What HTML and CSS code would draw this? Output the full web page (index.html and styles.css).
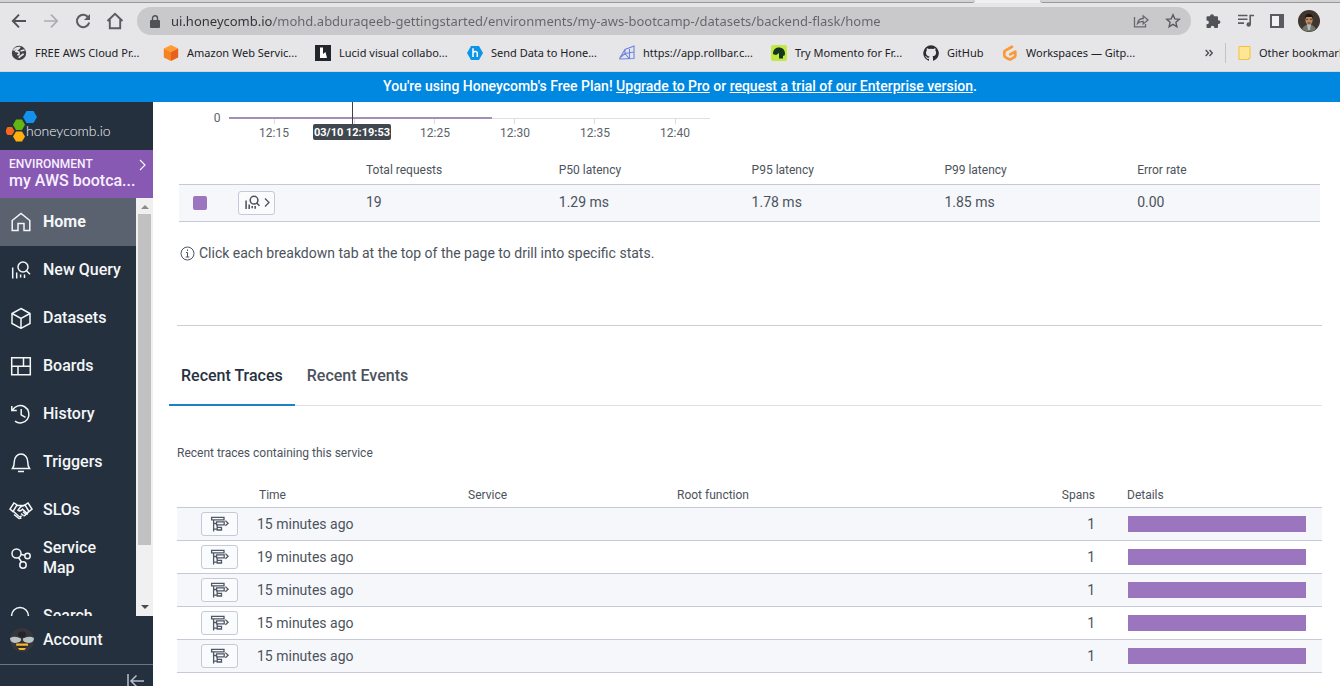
FILE: index.html
```html
<!DOCTYPE html>
<html lang="en">
<head>
<meta charset="utf-8">
<title>backend-flask | Honeycomb</title>
<link rel="stylesheet" href="styles.css">
</head>
<body>
<svg class="defs" aria-hidden="true">
  <symbol id="trace" viewBox="0 0 20 16">
    <g fill="none" stroke="#4f5866" stroke-width="1.3">
      <path d="M1.600 1.300h12.400v2.500h-12.400zM3.600 4v11.400M3.600 7.500h3M3.600 13.200h3M6.600 5.900h7.600v3h-7.600zM7.200 8.900v3M7.200 11.300h4.300v2.700h-4.300zM15.400 4.600l2.700 2.600-2.700 2.600"/>
    </g>
  </symbol>
  <symbol id="query" viewBox="0 0 22 22">
    <g fill="none" stroke="currentColor">
      <circle cx="13" cy="8" r="5"/><path d="M16.500 11.700l3.500 3.500M2.700 8.500v11M6.700 13.500v6M10.600 15.500v3M14.500 15.500v3.600"/>
    </g>
  </symbol>
</svg>

<header class="browser">
  <div class="tabstrip"><span class="tabstrip-edge"></span><span class="tabstrip-gap"></span><span class="tabstrip-edge tabstrip-edge-right"></span></div>
  <div class="toolbar">
    <button class="tool" aria-label="Back"><svg width="16" height="16" viewBox="0 0 16 16" fill="none" stroke="#4f5154" stroke-width="1.900"><path d="M15 8H2M8 1.700L1.800 8 8 14.300"/></svg></button>
    <button class="tool" aria-label="Forward"><svg width="16" height="16" viewBox="0 0 16 16" fill="none" stroke="#acadb0" stroke-width="1.700"><path d="M1 8h13M8 1.700L14.200 8 8 14.300"/></svg></button>
    <button class="tool" aria-label="Reload"><svg width="16" height="16" viewBox="0 0 16 16"><path d="M13.400 4.600A6.200 6.200 0 1 0 14.200 9.500" fill="none" stroke="#5a5c60" stroke-width="2"/><path d="M15 1v6H9z" fill="#5a5c60"/></svg></button>
    <button class="tool" aria-label="Home page"><svg width="18" height="18" viewBox="0 0 18 18" fill="none" stroke="#5a5c60" stroke-width="1.900"><path d="M1.500 9L9 1.800 16.500 9M3.800 7.500v8.700h10.400V7.500"/></svg></button>
    <div class="address">
      <svg width="10" height="13" viewBox="0 0 10 13"><path d="M1 5h8q1 0 1 1v6q0 1-1 1H1q-1 0-1-1V6q0-1 1-1z" fill="#505256"/><path d="M2.500 5.500V3.300a2.500 2.500 0 0 1 5 0v2.200" fill="none" stroke="#505256" stroke-width="1.400"/></svg>
      <input class="url" type="text" aria-label="Address" value="ui.honeycomb.io/mohd.abduraqeeb-gettingstarted/environments/my-aws-bootcamp-/datasets/backend-flask/home">
      <button class="tool tool-small" aria-label="Share"><svg width="16" height="16" viewBox="0 0 16 16" fill="none" stroke="#67696d" stroke-width="1.300"><path d="M1.500 4v9.800h11V11M4.500 10.500c.6-3.500 2.500-5 5.700-5V2.800L15 6.900l-4.800 4V8.300c-2.500 0-4.200.6-5.700 2.200z"/></svg></button>
      <button class="tool tool-small" aria-label="Bookmark"><svg width="16" height="16" viewBox="0 0 16 16" fill="none" stroke="#5a5c60" stroke-width="1.400"><path d="M8 1.800l1.800 4.100 4.500.4-3.400 3 1 4.400L8 11.400l-3.900 2.300 1-4.400-3.400-3 4.500-.4z"/></svg></button>
    </div>
    <div class="extensions">
      <button class="tool" aria-label="Extensions"><svg width="16" height="16" viewBox="0 0 16 16" fill="#505257"><path d="M5 3.200a2 2 0 0 1 4 0h3q1 0 1 1v3h.5a1.900 1.900 0 0 1 0 3.800H13v3q0 1-1 1H9.300v-.5a1.800 1.800 0 0 0-3.600 0v.5H2.500q-1 0-1-1v-2.800H2a1.900 1.900 0 0 0 0-3.800h-.5V4.200q0-1 1-1z"/></svg></button>
      <button class="tool" aria-label="Media"><svg width="17" height="16" viewBox="0 0 17 16"><path d="M1 2.500h9.500M1 6.300h9.500M1 10.100h6M13.200 11.500V2.500H17" fill="none" stroke="#5a5c60" stroke-width="1.600"/><circle cx="11.700" cy="11.500" r="2.200" fill="#5a5c60"/></svg></button>
      <button class="tool" aria-label="Side panel"><svg width="14" height="14" viewBox="0 0 14 14"><path d="M1 1h12v12H1z" fill="#f2f2f4" stroke="#5a5a60" stroke-width="2"/><path d="M9 1h4v12H9z" fill="#5a5a60"/></svg></button>
      <button class="tool" aria-label="Profile"><svg width="22" height="22" viewBox="0 0 22 22"><circle cx="11" cy="11" r="11" fill="#40362e"/><path d="M4 19q3-5 7-4.500 4-.5 7 4.500a11 11 0 0 1-14 0z" fill="#70786e"/><path d="M9 14h4l-1 6h-2z" fill="#b9bdba"/><ellipse cx="11" cy="10" rx="3.600" ry="5" fill="#bc8968"/><path d="M7 9c-.5-7 8.500-7 8 0l-1-2H8z" fill="#1d1816"/><path d="M8.200 9.300h2M12 9.300h2M9.600 13h3" stroke="#51372b"/></svg></button>
    </div>
  </div>
  <nav class="bookmarks" aria-label="Bookmarks">
    <a class="bookmark" href="#"><svg width="16" height="16" viewBox="0 0 16 16"><circle cx="8" cy="8" r="7.200" fill="#404247"/><path d="M2.500 5.500c2-3 5-3 6-3-.4 2-3.400 1.600-3.600 3.800 3 .2 3.500 1 3 3.200l-1.600.5M9.500 6l4-1M8 13.200c.3-2.500 3.600-2.500 4.500-4.500" fill="none" stroke="#e5e5e7" stroke-width="1.700"/></svg>FREE AWS Cloud Pr...</a>
    <a class="bookmark" href="#"><svg width="16" height="16" viewBox="0 0 16 16"><path d="M8 0l7.200 3.500L8 7 .8 3.500z" fill="#ff9c31"/><path d="M.8 3.500L8 7v9L.8 12.500z" fill="#f58220"/><path d="M15.200 3.500L8 7v9l7.200-3.500z" fill="#e8601c"/></svg>Amazon Web Servic...</a>
    <a class="bookmark" href="#"><svg width="16" height="16" viewBox="0 0 16 16"><path d="M0 0h16v16H0z" fill="#22252b"/><path d="M5 2.500h3V9l2.500-2 1.500 6H5z" fill="#fff"/></svg>Lucid visual collabo...</a>
    <a class="bookmark" href="#"><svg width="16" height="16" viewBox="0 0 16 16"><path d="M4 1h8l4 7-4 7H4L0 8z" fill="#0c95e8"/><path d="M6 3.300V12M6 8.500q0-2 2.200-2T10.300 8.500V12" fill="none" stroke="#fff" stroke-width="1.500"/></svg>Send Data to Hone...</a>
    <a class="bookmark" href="#"><svg width="16" height="16" viewBox="0 0 16 16" fill="none" stroke="#6c83df" stroke-width="1.100"><path d="M.8 13L6 4.500 15 1v12.500L.8 14zM6 4.500v4L.8 13M6 8.500L15 7M10.500 14V2.800M6 8.500L10.500 14"/></svg>https://app.rollbar.c...</a>
    <a class="bookmark" href="#"><svg width="16" height="16" viewBox="0 0 16 16"><rect width="16" height="16" rx="2" fill="#c2e842"/><path d="M2 9c0-5 3-6.500 6-6.500S14 4.500 14 8.500c0 2.500-1.500 2.500-2 2v3H8V8L5.200 10 3 9.500z" fill="#15351e"/></svg>Try Momento for Fr...</a>
    <a class="bookmark bookmark-short" href="#"><svg width="16" height="16" viewBox="0 0 16 16" fill="#2b2d31"><path d="M8 .2a8 8 0 0 0-2.500 15.500c.4.100.5-.2.500-.4v-1.500c-2.200.5-2.700-1-2.700-1-.4-.9-.9-1.200-.9-1.200-.7-.5.100-.5.100-.5.800.1 1.200.8 1.200.8.700 1.200 1.900.9 2.400.7 0-.5.200-.9.500-1.100C4.800 11.300 3 10.600 3 7.600c0-.9.300-1.600.8-2.200-.1-.2-.4-1 .1-2.100 0 0 .7-.2 2.200.8a7.600 7.600 0 0 1 4 0c1.500-1 2.200-.8 2.200-.8.400 1.100.1 1.900 0 2.100.500.600.8 1.300.8 2.200 0 3-1.900 3.700-3.600 3.900.3.300.5.800.5 1.500v2.300c0 .2.100.5.600.4A8 8 0 0 0 8 .2z"/></svg>GitHub</a>
    <a class="bookmark" href="#"><svg width="16" height="16" viewBox="0 0 16 16"><path d="M10 1.800L3.200 5.600q-.9.500-.9 1.500v3.500q0 1 .9 1.500L7 14.200q1 .5 2 0l3.400-2q.9-.5.900-1.500V6.600L8.200 9.400" fill="none" stroke="#fb9a35" stroke-width="2.700" stroke-linejoin="round" stroke-linecap="round"/></svg>Workspaces — Gitp...</a>
    <button class="more" aria-label="More bookmarks"><svg width="8" height="8" viewBox="0 0 8 8" fill="none" stroke="#4c4e52" stroke-width="1.400"><path d="M.7 1l2.800 3L.7 7M4.500 1l2.800 3-2.800 3"/></svg></button>
    <a class="bookmark folder" href="#"><svg width="13" height="16" viewBox="0 0 13 16"><path d="M1 1.500h11v12h-1.500v1H1z" fill="#ffe694" stroke="#efc33d"/></svg>Other bookmarks</a>
  </nav>
</header>

<div class="banner">You're using Honeycomb's Free Plan! <a href="#">Upgrade to Pro</a> or <a href="#">request a trial of our Enterprise version</a>.</div>

<div class="app">
  <aside class="sidebar">
    <a class="brand" href="#"><svg width="34" height="34" viewBox="0 0 34 34"><path d="M20.500 1h7l3.500 6-3.500 6h-7L17 7z" fill="#1292ef"/><path d="M10 9.500h6l3 5.200-3 5.200h-6l-3-5.200z" fill="#61b515"/><path d="M1.500 17H6l2.500 4L6 25H1.500L-1 21z" fill="#f9671f"/><path d="M10 21.500h6l3 5-3 5h-6l-3-5z" fill="#ffb00d"/></svg><span>honeycomb.io</span></a>
    <button class="environment">
      <span class="env-text"><span class="env-label">ENVIRONMENT</span><span class="env-name">my AWS bootca...</span></span>
      <svg width="7" height="12" viewBox="0 0 7 12" fill="none" stroke="#fff" stroke-width="1.100"><path d="M1 1l5 5-5 5"/></svg>
    </button>
    <div class="nav-area">
      <nav class="nav">
        <a class="nav-item active" href="#"><svg viewBox="0 0 22 22"><path d="M2.200 9.500L11 2.500l8.800 7v10H14v-7H8v7H2.200z"/></svg>Home</a>
        <a class="nav-item" href="#"><svg><use href="#query"/></svg>New Query</a>
        <a class="nav-item" href="#"><svg viewBox="0 0 22 22"><path d="M11 1.500l9 5v10L11 21.300l-9-4.800v-10zM2 6.500l9 5 9-5M11 11.500v9.800"/></svg>Datasets</a>
        <a class="nav-item" href="#"><svg viewBox="0 0 22 22"><path d="M1.700 2.700h18.600v17H1.700zM1.700 11.200h18.600M13.500 2.700v8.500M8 11.200v8.500"/></svg>Boards</a>
        <a class="nav-item" href="#"><svg viewBox="0 0 22 22"><path d="M1.800 3v4.500h5M2.500 7.200A8.700 8.700 0 1 1 5 18.200M11.200 6v5.800l4.300 2.500"/></svg>History</a>
        <a class="nav-item" href="#"><svg viewBox="0 0 22 22"><path d="M4.300 10.500a6.700 7.500 0 0 1 13.400 0c0 4 .7 5.500 1.800 7H2.500c1.100-1.500 1.800-3 1.800-7zM8 20.500h6"/></svg>Triggers</a>
        <a class="nav-item" href="#"><svg class="wide" viewBox="0 0 24 22"><path d="M5 4L1 10l3 2.500L8 6zM19 4l4 6-3 2.500L16 6zM7.500 6.500h5l2 .8M16.500 6.500c-3-.6-4 .3-5.500 2l-2 2.700c1.700 1.300 3.200.6 4.500-1l4.500 4M4.500 12.500l5 4.500q2 1.500 3-.3M12 14.500l2.300 2M14 12.800l2.600 2.300q2 .7 2-1.300l1-1.300M14.500 16.500q2 .7 2-1.500M5 15.500l5 4 2.500-.5"/></svg>SLOs</a>
        <a class="nav-item" href="#"><svg viewBox="0 0 22 22"><circle cx="6.500" cy="6.500" r="4.500"/><circle cx="17.500" cy="9" r="2.700"/><circle cx="13" cy="18" r="3.200"/><path d="M11 7.500l3.800.8M8.500 10.500l3 4.500"/></svg>Service Map</a>
        <a class="nav-item section" href="#"><svg viewBox="0 0 22 22"><circle cx="10" cy="11" r="8.500"/><path d="M16 17l4 4"/></svg>Search</a>
      </nav>
      <div class="scrollbar" aria-hidden="true"><i class="arrow-up"></i><i class="thumb"></i><i class="arrow-down"></i></div>
    </div>
    <button class="account"><svg width="24" height="24" viewBox="0 0 24 24"><circle cx="12" cy="12" r="12" fill="#37363c"/><ellipse cx="12" cy="6.500" rx="4" ry="3" fill="#252429"/><path d="M6 13.500h12q.5 5-6 9-6.500-4-6-9z" fill="#302c27"/><path d="M0 10q5-2.500 11 .5 1 4-6 4.500Q0 14.500 0 10zM24 10q-5-2.500-11 .5-1 4 6 4.500 5-.5 5-5z" fill="#b9c5c5"/><path d="M6 15.500h12v2.300H6.300zM8 20h8l-1.500 2h-5z" fill="#f5b731"/></svg>Account</button>
    <button class="collapse" aria-label="Collapse sidebar"><svg width="18" height="14" viewBox="0 0 18 14" fill="none" stroke="#b8bfc8" stroke-width="1.500"><path d="M2 0v14M18 7H5M10.500 1.500L5 7l5.500 5.500"/></svg></button>
  </aside>

  <main class="main">
    <svg class="chart" width="560" height="42" viewBox="0 0 560 42" role="img" aria-label="Requests over time">
      <path d="M52 16.500h481" stroke="#dedee3"/>
      <path d="M97.500 17v5M177.500 17v5M257.500 17v5M337.500 17v5M417.500 17v5M498.500 17v5" stroke="#dcd8e2"/>
      <path d="M52 16h263" stroke="#a48fba" stroke-width="2"/>
      <path d="M175.500 0v24" stroke="#3b424c"/>
      <g class="chart-label">
        <text x="40" y="20">0</text><text x="97" y="35">12:15</text><text x="258" y="35">12:25</text><text x="338" y="35">12:30</text><text x="418" y="35">12:35</text><text x="498" y="35">12:40</text>
      </g>
      <rect x="136" y="22" width="78" height="16" rx="2" fill="#40474f"/>
      <text class="chart-cursor" x="175" y="34">03/10 12:19:53</text>
    </svg>

    <table class="table stats">
      <colgroup><col class="col-swatch"><col class="col-action"><col><col><col><col><col></colgroup>
      <thead><tr><th></th><th></th><th scope="col">Total requests</th><th scope="col">P50 latency</th><th scope="col">P95 latency</th><th scope="col">P99 latency</th><th scope="col">Error rate</th></tr></thead>
      <tbody><tr><td><span class="swatch"></span></td><td><button class="row-button" aria-label="Query"><svg class="query-icon" width="17" height="17"><use href="#query"/></svg><svg width="6" height="9" viewBox="0 0 6 9" fill="none" stroke="currentColor" stroke-width="1.300"><path d="M1 .5l4 4-4 4"/></svg></button></td><td class="value">19</td><td class="value">1.29 ms</td><td class="value">1.78 ms</td><td class="value">1.85 ms</td><td class="value">0.00</td></tr></tbody>
    </table>

    <p class="hint"><svg width="15" height="15" viewBox="0 0 15 15" fill="none" stroke="#4d5560"><circle cx="7.500" cy="7.500" r="6.500"/><path d="M7.500 3.500v1.500M6 6.500h1.500V11M5.700 11h3.600"/></svg>Click each breakdown tab at the top of the page to drill into specific stats.</p>

    <div class="tabs" role="tablist">
      <button class="tab selected" role="tab" aria-selected="true">Recent Traces</button>
      <button class="tab" role="tab" aria-selected="false">Recent Events</button>
    </div>

    <p class="caption">Recent traces containing this service</p>
    <table class="table traces">
      <colgroup><col class="col-icon"><col class="col-text"><col class="col-text"><col><col class="col-spans"><col class="col-details"></colgroup>
      <thead><tr><th></th><th scope="col">Time</th><th scope="col">Service</th><th scope="col">Root function</th><th scope="col" class="spans">Spans</th><th scope="col">Details</th></tr></thead>
      <tbody>
        <tr><td><button class="row-button" aria-label="View trace"><svg width="20" height="16"><use href="#trace"/></svg></button></td><td class="time">15 minutes ago</td><td></td><td></td><td class="spans">1</td><td><div class="bar"></div></td></tr>
        <tr><td><button class="row-button" aria-label="View trace"><svg width="20" height="16"><use href="#trace"/></svg></button></td><td class="time">19 minutes ago</td><td></td><td></td><td class="spans">1</td><td><div class="bar"></div></td></tr>
        <tr><td><button class="row-button" aria-label="View trace"><svg width="20" height="16"><use href="#trace"/></svg></button></td><td class="time">15 minutes ago</td><td></td><td></td><td class="spans">1</td><td><div class="bar"></div></td></tr>
        <tr><td><button class="row-button" aria-label="View trace"><svg width="20" height="16"><use href="#trace"/></svg></button></td><td class="time">15 minutes ago</td><td></td><td></td><td class="spans">1</td><td><div class="bar"></div></td></tr>
        <tr><td><button class="row-button" aria-label="View trace"><svg width="20" height="16"><use href="#trace"/></svg></button></td><td class="time">15 minutes ago</td><td></td><td></td><td class="spans">1</td><td><div class="bar"></div></td></tr>
      </tbody>
    </table>
  </main>
</div>
</body>
</html>
```

FILE: styles.css
```css
* { box-sizing: border-box; }
body { margin: 0; height: 100vh; overflow: hidden; display: flex; flex-direction: column; font: 14px/20px Roboto, "Liberation Sans", sans-serif; color: #4c535c; background: #fff; }
button { font: inherit; color: inherit; border: 0; padding: 0; background: none; cursor: pointer; }
a { color: inherit; }
svg { flex: none; }
p { margin: 0; }
.defs { position: absolute; width: 0; height: 0; }

/* Browser frame */
.browser { flex: none; background: #e6e6e9; border-bottom: 1px solid #d4d5d9; font-family: "Noto Sans", "Open Sans", sans-serif; }
.tabstrip { display: flex; height: 3px; background: #f0f0f1; }
.tabstrip-edge { flex: 975; background: #d3d3d5; border-bottom: 1px solid #98989b; border-radius: 0 0 3px 0; }
.tabstrip-gap { flex: 65; }
.tabstrip-edge-right { flex: 300; border-radius: 0 0 0 3px; }
.toolbar { display: flex; align-items: center; height: 36px; padding: 0 15px 0 3px; }
.tool { width: 32px; height: 32px; display: grid; place-items: center; }
.address { flex: 1; display: flex; align-items: center; height: 28px; margin: 0 6px; padding: 0 2px 0 13px; border-radius: 14px; background: #c9c9cb; }
.url { flex: 1; min-width: 0; margin: 0 8px 0 11px; padding: 0; border: 0; outline: 0; font: 13px/20px "Noto Sans", "Open Sans", sans-serif; color: transparent; background: linear-gradient(to right, #303134 0 102px, #626468 102px); -webkit-background-clip: text; background-clip: text; }
.extensions { display: flex; }
.bookmarks { display: flex; align-items: center; height: 32px; padding: 0 0 4px 11px; font-size: 11px; color: #202124; }
.bookmark { flex: none; width: 152px; display: flex; align-items: center; gap: 8px; white-space: nowrap; text-decoration: none; }
.bookmark-short { width: 79px; }
.more { margin-left: auto; width: 32px; height: 24px; display: grid; place-items: center; }
.folder { width: 115px; padding-left: 12px; border-left: 1px solid #c2c3c6; overflow: hidden; }

.banner { flex: none; height: 30px; padding: 0 8px 0 28px; line-height: 29px; text-align: center; color: #fff; background: #0087e0; font-weight: 500; }

.app { flex: 1; min-height: 0; display: flex; }

/* Sidebar */
.sidebar { flex: none; width: 153px; display: flex; flex-direction: column; color: #f4f6f8; background: #25303e; font-size: 16px; font-weight: 500; }
.brand { flex: none; display: flex; height: 48px; padding: 8px 0 0 6px; text-decoration: none; font: 300 14px/20px Lato, sans-serif; }
.brand span { margin: 11px 0 0 -14px; }
.environment { flex: none; display: flex; justify-content: space-between; height: 48px; padding: 6px 7px 0 9px; text-align: left; background: #8759b3; color: #f7f0ff; }
.environment svg { margin-top: 3px; }
.env-text { min-width: 0; display: flex; flex-direction: column; }
.env-label { font-size: 12px; line-height: 16px; }
.env-name { line-height: 18px; white-space: nowrap; }
.nav-area { flex: 1; min-height: 0; display: flex; }
.nav { flex: 1; overflow: hidden; }
.nav-item { display: flex; align-items: center; gap: 11px; height: 48px; padding: 0 8px 0 10px; text-decoration: none; }
.nav-item svg { width: 22px; height: 22px; fill: none; stroke: #f4f6f8; stroke-width: 1.5; }
.nav-item svg.wide { width: 24px; margin: 0 -1px; }
.nav-item.active { background: #59626e; font-weight: 700; }
.nav-item.section { margin-top: 10px; }
.scrollbar { flex: none; width: 17px; display: flex; flex-direction: column; align-items: center; padding: 7px 0; background: #f0f0f0; }
.arrow-up, .arrow-down { border: 4px solid transparent; }
.arrow-up { border-top: 0; border-bottom-color: #8a8a8a; }
.arrow-down { border-bottom: 0; border-top-color: #4b4b4b; }
.thumb { width: 13px; height: 82%; margin: 5px 0 auto; background: #c1c1c1; }
.account { flex: none; display: flex; align-items: center; gap: 9px; height: 48px; padding-left: 10px; }
.collapse { flex: none; display: flex; justify-content: flex-end; height: 22px; padding: 9px 9px 0 0; border-top: 1px solid #6b7480; overflow: hidden; }

/* Page content */
.main { flex: 1; min-width: 0; padding: 0 18px 0 24px; }
.chart { display: block; }
.chart-label { font-size: 12px; fill: #5c626b; text-anchor: middle; }
.chart-cursor { font-size: 11px; font-weight: 700; fill: #fff; text-anchor: middle; }
.table { border-collapse: collapse; table-layout: fixed; width: 100%; }
.table th { padding: 0 10px; font-size: 12px; font-weight: 400; text-align: left; }
.table td { padding: 0 10px; }
.table tbody tr { border-top: 1px solid #c5c9d8; border-bottom: 1px solid #c5c9d8; }
.table tbody tr:nth-child(odd) { background: #f5f7fb; }
.stats { width: calc(100% - 4px); margin: 12px 2px 0; }
.stats th { height: 28px; padding-bottom: 0; }
.stats td { height: 37px; }
.stats .value { padding-bottom: 2px; }
.col-swatch { width: 49px; }
.col-action { width: 128px; }
.swatch { display: block; width: 14px; height: 14px; margin-left: 4px; border-radius: 2px; background: #9b75be; }
.row-button { display: flex; align-items: center; justify-content: center; gap: 3px; width: 37px; height: 24px; border: 1px solid #c5c9d8; border-radius: 3px; background: #fafbfd; }
.query-icon { stroke-width: 2; }
.hint { display: flex; align-items: center; gap: 4px; height: 104px; padding: 0 0 40px 3px; border-bottom: 1px solid #cdced3; }
.tabs { display: flex; margin: 24px 0 0 -8px; border-bottom: 1px solid #dfe0e5; }
.tab { height: 56px; padding: 0 12px 2px; margin-bottom: -1px; font-size: 16px; font-weight: 500; border-bottom: 2px solid transparent; }
.tab.selected { color: #28323f; border-bottom-color: #1c82c4; }
.caption { margin: 37px 0 20px; font-size: 12px; }
.traces th { height: 25px; }
.traces td { height: 33px; }
.traces .row-button { margin-left: 14px; }
.col-icon { width: 72px; }
.col-text { width: 209px; }
.col-spans { width: 90px; }
.col-details { width: 205px; }
.table .time { padding-left: 8px; }
.table .spans { padding-right: 22px; text-align: right; }
.bar { height: 16px; margin: 0 6px 0 1px; background: #9b75be; }
```
